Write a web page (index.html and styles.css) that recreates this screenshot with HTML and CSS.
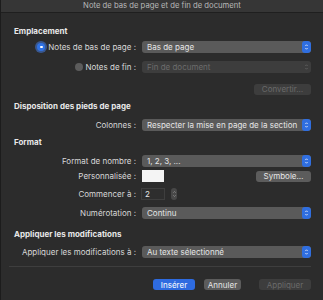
FILE: index.html
```html
<!DOCTYPE html>
<html lang="fr">
<head>
<meta charset="utf-8">
<link rel="stylesheet" href="styles.css">
</head>
<body>
<div class="window">
  <div class="titlebar">Note de bas de page et de fin de document</div>
  <div class="content">
    <div class="heading h-empl">Emplacement</div>
    <div class="row r-foot">
      <div class="label"><span class="radio on"></span>Notes de bas de page :</div>
      <div class="popup">Bas de page<span class="stepper blue"><svg viewBox="0 0 6 10" width="5" height="8"><path d="M1.5 3.8 L3 2.2 L4.5 3.8 M1.5 6.2 L3 7.8 L4.5 6.2" fill="none" stroke="#fff" stroke-width="0.9"/></svg></span></div>
    </div>
    <div class="row r-end">
      <div class="label"><span class="radio off"></span>Notes de fin :</div>
      <div class="popup disabled">Fin de document<span class="stepper"><svg viewBox="0 0 6 10" width="5" height="8"><path d="M1.5 3.8 L3 2.2 L4.5 3.8 M1.5 6.2 L3 7.8 L4.5 6.2" fill="none" stroke="#6a6a6a" stroke-width="0.9"/></svg></span></div>
    </div>
    <div class="row r-conv">
      <div class="label"></div>
      <div class="right"><span class="btn disabled b-conv">Convertir…</span></div>
    </div>
    <div class="heading h-disp">Disposition des pieds de page</div>
    <div class="row r-col">
      <div class="label">Colonnes :</div>
      <div class="popup">Respecter la mise en page de la section<span class="stepper blue"><svg viewBox="0 0 6 10" width="5" height="8"><path d="M1.5 3.8 L3 2.2 L4.5 3.8 M1.5 6.2 L3 7.8 L4.5 6.2" fill="none" stroke="#fff" stroke-width="0.9"/></svg></span></div>
    </div>
    <div class="heading h-fmt">Format</div>
    <div class="row r-num">
      <div class="label">Format de nombre :</div>
      <div class="popup">1, 2, 3, ...<span class="stepper blue"><svg viewBox="0 0 6 10" width="5" height="8"><path d="M1.5 3.8 L3 2.2 L4.5 3.8 M1.5 6.2 L3 7.8 L4.5 6.2" fill="none" stroke="#fff" stroke-width="0.9"/></svg></span></div>
    </div>
    <div class="row r-pers">
      <div class="label">Personnalisée :</div>
      <div class="split"><span class="whitebox"></span><span class="btn b-sym">Symbole…</span></div>
    </div>
    <div class="row r-start">
      <div class="label">Commencer à :</div>
      <div class="fieldline"><span class="field">2</span><span class="spin"><svg viewBox="0 0 6 12" width="5" height="10"><path d="M1.5 4.5 L3 3 L4.5 4.5 M1.5 7.5 L3 9 L4.5 7.5" fill="none" stroke="#9a9a9a" stroke-width="0.8"/></svg></span></div>
    </div>
    <div class="row r-numer">
      <div class="label">Numérotation :</div>
      <div class="popup">Continu<span class="stepper blue"><svg viewBox="0 0 6 10" width="5" height="8"><path d="M1.5 3.8 L3 2.2 L4.5 3.8 M1.5 6.2 L3 7.8 L4.5 6.2" fill="none" stroke="#fff" stroke-width="0.9"/></svg></span></div>
    </div>
    <div class="heading h-appl">Appliquer les modifications</div>
    <div class="row r-appl">
      <div class="label">Appliquer les modifications à :</div>
      <div class="popup">Au texte sélectionné<span class="stepper blue"><svg viewBox="0 0 6 10" width="5" height="8"><path d="M1.5 3.8 L3 2.2 L4.5 3.8 M1.5 6.2 L3 7.8 L4.5 6.2" fill="none" stroke="#fff" stroke-width="0.9"/></svg></span></div>
    </div>
    <div class="separator"></div>
    <div class="actions">
      <span class="btn primary b-ins">Insérer</span>
      <span class="btn b-ann">Annuler</span>
      <span class="btn disabled b-app">Appliquer</span>
    </div>
  </div>
</div>
</body>
</html>
```

FILE: styles.css
```css
* { box-sizing: border-box; }
html, body {
  margin: 0;
  padding: 0;
  background: #2c2c2c;
}
body {
  font-family: "Inter", "Liberation Sans", sans-serif;
  font-size: 8px;
  color: #d6d6d6;
  width: 323px;
  height: 300px;
  overflow: hidden;
}
.window {
  width: 323px;
  height: 300px;
  background: #2c2c2c;
  border-left: 1px solid #1c1c1c;
}
.titlebar {
  height: 13px;
  line-height: 12px;
  text-align: center;
  color: #b8b8b8;
  background: #363636;
  border-bottom: 1px solid #1f1f1f;
  font-size: 7.7px;
}
.content {
  display: flex;
  flex-direction: column;
  padding: 0 12px 0 7px;
}
.heading {
  font-weight: 700;
  color: #e8e8e8;
  height: 10px;
  line-height: 10px;
  padding-left: 6px;
}
.h-empl { margin-top: 13px; }
.h-disp { margin-top: 6px; }
.h-fmt { margin-top: 6px; }
.h-appl { margin-top: 10px; }
.row {
  display: grid;
  grid-template-columns: 128px 169px;
  column-gap: 6px;
  align-items: center;
  height: 12px;
}
.r-foot { margin-top: 5px; }
.r-end { margin-top: 8px; }
.r-conv { margin-top: 10px; }
.r-col { margin-top: 8px; }
.r-num { margin-top: 8px; }
.r-pers { margin-top: 3px; }
.r-start { margin-top: 6px; }
.r-numer { margin-top: 7px; }
.r-appl { margin-top: 7px; }
.label {
  text-align: right;
  white-space: nowrap;
  color: #d8d8d8;
  display: flex;
  justify-content: flex-end;
  align-items: center;
}
.radio {
  display: inline-block;
  width: 8px;
  height: 8px;
  border-radius: 50%;
  margin-right: 3px;
  flex: none;
}
.radio.on {
  background: #2f72e4;
  box-shadow: 0 0 0 2px rgba(70, 130, 240, 0.5);
  position: relative;
}
.radio.on::after {
  content: "";
  position: absolute;
  left: 2.75px;
  top: 2.75px;
  width: 2.5px;
  height: 2.5px;
  border-radius: 50%;
  background: #fff;
}
.radio.off {
  background: #5c5c5c;
}
.popup {
  height: 12px;
  line-height: 12px;
  border-radius: 3px;
  background: #5a5a5a;
  color: #e6e6e6;
  padding-left: 5px;
  display: flex;
  justify-content: space-between;
  align-items: center;
  white-space: nowrap;
  overflow: hidden;
}
.popup.disabled {
  background: #3d3d3d;
  color: #6c6c6c;
}
.stepper {
  width: 9px;
  height: 12px;
  border-radius: 3px;
  display: flex;
  align-items: center;
  justify-content: center;
  flex: none;
}
.stepper.blue { background: #2f6ee0; }
.right {
  display: flex;
  justify-content: flex-end;
}
.btn {
  display: inline-flex;
  align-items: center;
  justify-content: center;
  height: 11px;
  border-radius: 3px;
  background: #5c5c5c;
  color: #e6e6e6;
  white-space: nowrap;
}
.btn.disabled {
  background: #3d3d3d;
  color: #6a6a6a;
}
.btn.primary {
  background: #2e6be0;
  color: #fff;
}
.b-conv { width: 57px; }
.split {
  display: flex;
  justify-content: space-between;
  align-items: center;
}
.whitebox {
  width: 22px;
  height: 12px;
  background: #f4f4f4;
}
.b-sym { width: 55px; }
.fieldline {
  display: flex;
  align-items: center;
  margin-left: -1px;
}
.field {
  width: 24px;
  height: 12px;
  line-height: 10px;
  background: #2e2e2e;
  border: 1px solid #3e3e3e;
  padding-left: 3px;
  color: #e6e6e6;
}
.spin {
  margin-left: 6px;
  width: 6px;
  height: 12px;
  border-radius: 3px;
  background: #484848;
  display: flex;
  align-items: center;
  justify-content: center;
}
.separator {
  margin-top: 8px;
  height: 1px;
  background: #3e3e3e;
  margin-left: 1px;
}
.actions {
  display: flex;
  justify-content: flex-end;
  margin-top: 12px;
}
.b-ins { width: 42px; }
.b-ann { width: 37px; margin-left: 9px; }
.b-app { width: 52px; margin-left: 18px; }
```
